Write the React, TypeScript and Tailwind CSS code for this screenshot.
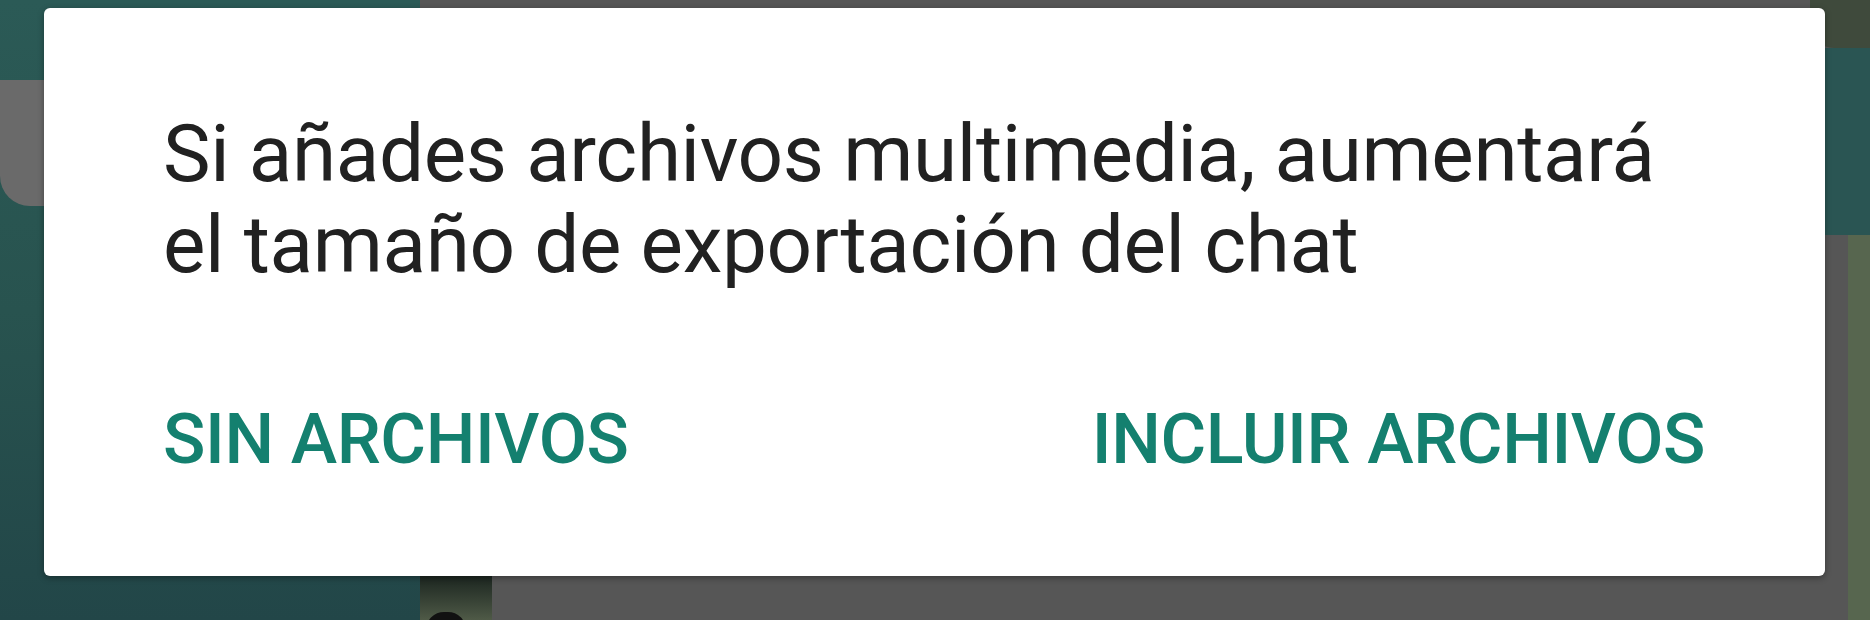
import React from "react";

// Dimmed chat screen behind the dialog (only its edges show)
const Backdrop = () => (
  <div className="flex h-full w-full">
    <div className="flex w-[420px] flex-col bg-gradient-to-b from-[#2b5a56] via-[#28534f] to-[#224648]">
      <div className="h-[80px]" />
      <div className="h-[126px] w-[60px] rounded-bl-[30px] bg-[#6a6a6a]" />
    </div>
    <div className="flex flex-1 flex-col items-start justify-end bg-[#565656]">
      <div className="flex h-[44px] w-[72px] items-end justify-start overflow-hidden bg-gradient-to-b from-[#1c2620] to-[#4f5a47] pl-[6px]">
        <div className="mb-[-10px] h-[18px] w-[40px] rounded-t-full bg-[#111]" />
      </div>
    </div>
    <div className="flex w-[60px] flex-col bg-[#565656]">
      <div className="h-[48px] rounded-bl-[24px] bg-[#3f4a3c]" />
      <div className="h-[187px] bg-[#2a5553]" />
      <div className="flex flex-1 justify-end">
        <div className="w-[22px] bg-[#57664f]" />
      </div>
    </div>
  </div>
);

const DialogButton = ({ label }: { label: string }) => (
  <button className="text-[70px] font-medium leading-[82px] tracking-[-0.4px] text-[#14806f] uppercase">
    {label}
  </button>
);

export default function App() {
  return (
    <div
      className="relative h-[620px] w-[1870px] overflow-hidden bg-[#565656]"
      style={{ fontFamily: "Roboto, 'Noto Sans', sans-serif" }}
    >
      <Backdrop />
      <div className="absolute left-[44px] top-[8px] h-[568px] w-[1781px] rounded-[6px] bg-white pl-[119px] pr-[120px] pt-[101px] shadow-[0_2px_6px_rgba(0,0,0,0.35)]">
        <p className="text-[80px] leading-[91px] tracking-[-0.35px] text-[#212121]">
          Si añades archivos multimedia, aumentará
          <br />
          el tamaño de exportación del chat
        </p>
        <div className="mt-[107px] flex items-center justify-between">
          <DialogButton label="Sin archivos" />
          <DialogButton label="Incluir archivos" />
        </div>
      </div>
    </div>
  );
}
